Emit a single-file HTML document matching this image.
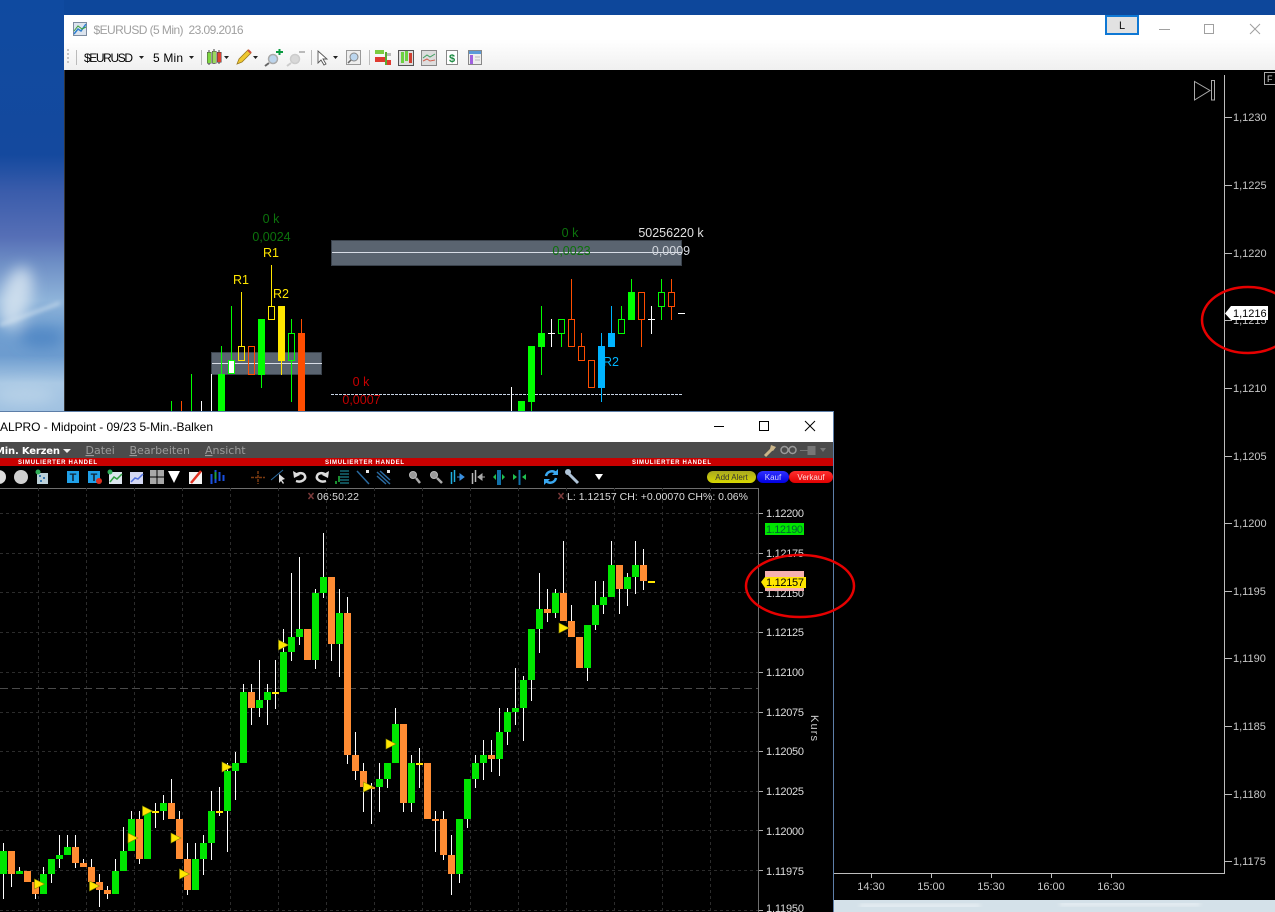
<!DOCTYPE html>
<html lang="de"><head><meta charset="utf-8"><title>EURUSD</title>
<style>html,body{margin:0;padding:0;background:#000;width:1275px;height:912px;overflow:hidden}svg{display:block}text{font-family:"Liberation Sans",Arial,sans-serif}</style></head>
<body>
<svg xmlns="http://www.w3.org/2000/svg" width="1275" height="912" viewBox="0 0 1275 912">
<defs>
<linearGradient id="sea" x1="0" y1="0" x2="0" y2="1"><stop offset="0" stop-color="#0f4aa0"/><stop offset=".17" stop-color="#14499e"/><stop offset=".21" stop-color="#3a5cab"/><stop offset=".26" stop-color="#566fb6"/><stop offset=".29" stop-color="#6f90c6"/><stop offset=".33" stop-color="#8fb4da"/><stop offset=".36" stop-color="#6f9ed0"/><stop offset=".39" stop-color="#6d9ccf"/><stop offset=".42" stop-color="#a9c8e4"/><stop offset=".46" stop-color="#9dbfe0"/><stop offset="1" stop-color="#9dbfe0"/></linearGradient>
<linearGradient id="tb" x1="0" y1="0" x2="0" y2="1"><stop offset="0" stop-color="#fff"/><stop offset=".45" stop-color="#fff"/><stop offset="1" stop-color="#f0f0f0"/></linearGradient>
<linearGradient id="pa" x1="0" y1="0" x2="0" y2="1"><stop offset="0" stop-color="#a8a820"/><stop offset="1" stop-color="#d8d800"/></linearGradient>
<linearGradient id="pb" x1="0" y1="0" x2="0" y2="1"><stop offset="0" stop-color="#3030ff"/><stop offset="1" stop-color="#0000e0"/></linearGradient>
<linearGradient id="pr" x1="0" y1="0" x2="0" y2="1"><stop offset="0" stop-color="#ff3030"/><stop offset="1" stop-color="#e00000"/></linearGradient>
<filter id="b8" x="-50%" y="-50%" width="200%" height="200%"><feGaussianBlur stdDeviation="7"/></filter>
<filter id="b3" x="-50%" y="-50%" width="200%" height="200%"><feGaussianBlur stdDeviation="2"/></filter>
<clipPath id="lw"><rect x="0" y="488" width="758" height="424"/></clipPath>
<path id="ar" d="M0-5 L10 0 L0 5Z"/>
</defs>

<!-- desktop background -->
<rect width="1275" height="912" fill="url(#sea)"/>
<rect x="64" y="0" width="1211" height="16" fill="#0d479b"/>
<g filter="url(#b8)"><ellipse cx="16" cy="298" rx="15" ry="32" fill="#d6e4f0" opacity=".85" transform="rotate(15 16 298)"/><ellipse cx="42" cy="338" rx="22" ry="9" fill="#4f86c4"/><ellipse cx="25" cy="395" rx="30" ry="8" fill="#b8d2e8"/></g>
<g filter="url(#b3)"><path d="M0 325L60 303" stroke="#d5e4f0" stroke-width="2"/></g>

<!-- upper window -->
<rect x="64" y="15" width="1211" height="897" fill="#000"/>
<rect x="64" y="15" width="1211" height="55" fill="url(#tb)"/>
<!-- bottom desktop strip -->
<rect x="834" y="900" width="441" height="12" fill="#d4e1e9"/>
<g filter="url(#b3)"><path d="M860 906H980M1060 904H1200" stroke="#eef3f6" stroke-width="3"/></g>
<rect x="64" y="70" width="1" height="342" fill="#333"/>
<!-- title icon -->
<rect x="73.500" y="22.500" width="13" height="13" fill="#dce4ee" stroke="#7d8ca0"/><path d="M74 34L78 29 81 31 86 24" fill="none" stroke="#2f7fd0" stroke-width="1.500"/><path d="M74 31L78 26 82 29 86 27" fill="none" stroke="#3aa040"/>
<text x="93.500" y="34" font-size="12" fill="#a0a0a0" textLength="150">$EURUSD (5 Min)&#160;&#160;23.09.2016</text>
<!-- L button + window controls -->
<rect x="1106" y="16" width="32" height="18" fill="#e2e2e2" stroke="#0f78d4" stroke-width="2"/>
<text x="1122" y="29" font-size="11" fill="#111" text-anchor="middle">L</text>
<path d="M1159 29.500H1170" stroke="#a0a0a0"/>
<rect x="1204.500" y="24.500" width="9" height="9" fill="none" stroke="#a0a0a0"/>
<path d="M1250 24L1260 34M1260 24L1250 34" stroke="#a0a0a0" fill="none"/>
<!-- toolbar -->
<path d="M68 49V51M68 53V55M68 57V59M68 61V63" stroke="#c4c4c4" stroke-width="2"/>
<path d="M76.500 50V65M201.500 50V65M311.500 50V65M369.500 50V65" stroke="#bbb"/>
<text x="84" y="62" font-size="12" fill="#000" textLength="49">$EURUSD</text>
<path d="M139 56h5l-2.500 3z" fill="#222"/>
<text x="153" y="62" font-size="12" fill="#000" textLength="30">5 Min</text>
<path d="M189 56h5l-2.500 3z" fill="#222"/>
<path d="M209 50v15M214 49v15M219 50v14" stroke="#444"/>
<g shape-rendering="crispEdges"><rect x="207" y="52" width="4" height="11" fill="#7ed840" stroke="#444" stroke-width=".5"/><rect x="212" y="51" width="4" height="12" fill="#9ad860" stroke="#444" stroke-width=".5"/><rect x="217" y="52" width="4" height="10" fill="#e04030" stroke="#444" stroke-width=".5"/></g>
<path d="M224 56h5l-2.500 3z" fill="#222"/>
<path d="M237 64l2-5 9-9 3 3-9 9z" fill="#f0c830" stroke="#9a7a20" stroke-width=".8"/><path d="M248 50l3 3" stroke="#d05040" stroke-width="2"/>
<path d="M253 56h5l-2.500 3z" fill="#222"/>
<circle cx="273" cy="59" r="4.500" fill="#bcd4ec" stroke="#aaa" stroke-width="1.500"/><path d="M269 63l-4 3" stroke="#666" stroke-width="2"/><path d="M276 52h7M279.500 49v6" stroke="#0a9a40" stroke-width="2"/>
<circle cx="295" cy="59" r="4.500" fill="#d8d8d8" stroke="#ccc" stroke-width="1.500"/><path d="M291 63l-4 3" stroke="#ccc" stroke-width="2"/><path d="M299 52h6" stroke="#bbb" stroke-width="2"/>
<path d="M318 51l9 8-4 0 3 5-2 1-3-5-3 3z" fill="#fff" stroke="#555" stroke-width=".9"/>
<path d="M333 56h5l-2.500 3z" fill="#222"/>
<rect x="346.500" y="50.500" width="14" height="14" fill="#eee" stroke="#999"/><circle cx="354" cy="57" r="4" fill="#bcd6ee" stroke="#888"/><path d="M351 60l-3 3" stroke="#666" stroke-width="1.500"/>
<g shape-rendering="crispEdges"><rect x="375" y="50" width="9" height="4" fill="#7ccc40"/><rect x="375" y="57" width="10" height="5" fill="#e03a30"/><rect x="387" y="53" width="4" height="3" fill="#bbb"/><rect x="387" y="60" width="4" height="5" fill="#e03a30"/><rect x="385" y="52" width="2" height="13" fill="#5aaa30"/></g>
<rect x="398.500" y="50.500" width="15" height="15" fill="#ddd" stroke="#555"/><g shape-rendering="crispEdges"><rect x="401" y="52" width="3" height="11" fill="#6bd040"/><rect x="405" y="51" width="3" height="10" fill="#6bd040"/><rect x="409" y="53" width="3" height="10" fill="#d04030"/></g>
<rect x="421.500" y="50.500" width="15" height="15" fill="#ddd" stroke="#888"/><path d="M423 58l4-3 3 2 5-3" fill="none" stroke="#40a060"/><path d="M423 61l4-2 3 2 5-1" fill="none" stroke="#d06050"/>
<rect x="446.500" y="50.500" width="11" height="14" fill="#fff" stroke="#888"/><text x="452" y="62" font-size="11" font-weight="bold" fill="#1a8a40" text-anchor="middle">$</text>
<rect x="468.500" y="50.500" width="13" height="14" fill="#eee" stroke="#888"/><rect x="469" y="51" width="12" height="3" fill="#5a9ad8"/><rect x="470" y="55" width="3" height="9" fill="#a060e0"/><path d="M475 57h5M475 60h5" stroke="#bbb"/>

<!-- right axis of upper chart -->
<path d="M1224.500 75V873.500H833" fill="none" stroke="#bdbdbd"/>
<rect x="1264.500" y="72.500" width="12" height="12" fill="none" stroke="#aaa"/><text x="1267" y="82" font-size="9" fill="#ccc">F</text>
<path d="M1194.500 81.500V100L1210 90.500Z" fill="none" stroke="#aaa"/><rect x="1211.500" y="80.500" width="3" height="19.500" fill="none" stroke="#aaa"/>
<path d="M1225 117.500h7M1225 185.500h7M1225 253.500h7M1225 320.500h7M1225 388.500h7M1225 456.500h7M1225 523.500h7M1225 591.500h7M1225 658.500h7M1225 726.500h7M1225 794.500h7M1225 861.500h7M871.500 874v4M931.500 874v4M991.500 874v4M1051.500 874v4M1111.500 874v4" stroke="#bdbdbd"/>
<g font-size="11" fill="#c6c6c6">
<text x="1233" y="121">1,1230</text><text x="1233" y="189">1,1225</text><text x="1233" y="257">1,1220</text><text x="1233" y="324">1,1215</text><text x="1233" y="392">1,1210</text><text x="1233" y="460">1,1205</text><text x="1233" y="527">1,1200</text><text x="1233" y="595">1,1195</text><text x="1233" y="662">1,1190</text><text x="1233" y="730">1,1185</text><text x="1233" y="798">1,1180</text><text x="1233" y="865">1,1175</text>
<text x="871" y="890" text-anchor="middle">14:30</text><text x="931" y="890" text-anchor="middle">15:00</text><text x="991" y="890" text-anchor="middle">15:30</text><text x="1051" y="890" text-anchor="middle">16:00</text><text x="1111" y="890" text-anchor="middle">16:30</text>
</g>
<path d="M1225 313.500L1231 306H1268V320H1231Z" fill="#fff"/>
<text x="1233" y="317" font-size="11" fill="#000">1,1216</text>

<!-- upper gray boxes -->
<rect x="211.500" y="352.500" width="110" height="22" fill="#5a6470" stroke="#3a424c"/><path d="M212 363.500H322" stroke="#d8dde6"/>
<rect x="331.500" y="240.500" width="350" height="25" fill="#5a6470" stroke="#3a424c"/><path d="M332 252.500H682" stroke="#d8dde6"/>
<path d="M331 394.500H682" stroke="#c8d4e6" stroke-dasharray="3 1"/>

<!-- upper candles -->
<g shape-rendering="crispEdges" fill="none">
<path stroke="#00ff00" d="M171.500 401V411M191.500 374V411M221.500 346V374M231.500 306V360M261.500 375V388M291.500 319V333M291.500 361V402M531.500 402V411M521.500 405V411M541.500 306V333M541.500 347V375M561.500 334V347M621.500 306V319M631.500 279V292M661.500 279V292M661.500 307V320"/>
<path stroke="#ff4d00" d="M181.500 401V411M301.500 319V333M571.500 279V319M581.500 333V346M641.500 320V347M671.500 279V292M671.500 307V320"/>
<path stroke="#ffe600" d="M241.500 292V346M271.500 265V306M281.500 361V375"/>
<path stroke="#fff" d="M201.500 401V411M211.500 374V411M511.500 387V411M551.500 319V347M651.500 306V334M548 333.500H555M648 319.500H655M678 313.500H685"/>
<path stroke="#00b4ff" d="M601.500 333V346M601.500 388V402M611.500 306V333"/>
<path fill="#00ff00" d="M218 374h7v37h-7zM258 319h7v56h-7zM518 401h7v10h-7zM528 346h7v56h-7zM538 333h7v14h-7zM628 292h7v28h-7z"/>
<path fill="#ff4d00" d="M298 333h7v78h-7z"/>
<path fill="#ffe600" d="M278 306h7v55h-7z"/>
<path fill="#00b4ff" d="M598 346h7v42h-7zM608 333h7v14h-7z"/>
<rect x="228.500" y="360.500" width="6" height="13" fill="#fff" stroke="#00ff00"/>
<path stroke="#ffe600" d="M238.500 346.500h6v14h-6zM268.500 306.500h6v13h-6z"/>
<path stroke="#00ff00" d="M288.500 333.500h6v27h-6zM558.500 319.500h6v14h-6zM618.500 319.500h6v14h-6zM658.500 292.500h6v14h-6z"/>
<path stroke="#ff4d00" d="M248.500 346.500h6v28h-6zM568.500 319.500h6v27h-6zM578.500 346.500h6v14h-6zM588.500 360.500h6v27h-6zM638.500 292.500h6v27h-6zM668.500 292.500h6v14h-6z"/>
</g>
<g font-size="12.500" text-anchor="middle">
<text x="271" y="223" fill="#0c720c">0 k</text><text x="271.500" y="241" fill="#0c720c">0,0024</text><text x="271" y="257" fill="#ffe600">R1</text><text x="241" y="284" fill="#ffe600">R1</text><text x="281" y="298" fill="#ffe600">R2</text>
<text x="361" y="386" fill="#c80000">0 k</text><text x="361.500" y="404" fill="#c00000">0,0007</text>
<text x="570" y="237" fill="#0c720c">0 k</text><text x="571.500" y="255" fill="#0c720c">0,0023</text><text x="671" y="237" fill="#e0e0e0">50256220 k</text><text x="671" y="255" fill="#d4d8de">0,0009</text>
<text x="611" y="366" fill="#00b4ff">R2</text>
</g>

<!-- lower window -->
<rect x="0" y="411" width="834" height="501" fill="#000"/>
<path d="M0 411.500H833.500V912" fill="none" stroke="#5d7ea8"/>
<rect x="0" y="412" width="833" height="30" fill="#fff"/>
<text x="0" y="431" font-size="12" fill="#000" textLength="213">ALPRO - Midpoint - 09/23 5-Min.-Balken</text>
<path d="M714 426.500H724" stroke="#000"/><rect x="759.500" y="421.500" width="9" height="9" fill="none" stroke="#000"/><path d="M805 421L815 431M815 421L805 431" stroke="#000" fill="none"/>
<rect x="0" y="442" width="833" height="16" fill="#4b4b4b"/>
<g font-size="11" fill="#9c9c9c">
<text x="-5" y="454" fill="#fff" font-weight="bold" font-size="10" textLength="65" style="font-family:'DejaVu Sans',sans-serif">Min. Kerzen</text>
<text x="85.500" y="454" style="font-family:'DejaVu Sans',sans-serif"><tspan text-decoration="underline">D</tspan>atei</text>
<text x="129.500" y="454" style="font-family:'DejaVu Sans',sans-serif"><tspan text-decoration="underline">B</tspan>earbeiten</text>
<text x="205" y="454" style="font-family:'DejaVu Sans',sans-serif"><tspan text-decoration="underline">A</tspan>nsicht</text>
</g>
<path d="M63 449h8l-4 4z" fill="#eee"/>
<!-- menu right icons -->
<path d="M765 456l7-7" stroke="#cbb68a" stroke-width="3"/><path d="M771 445l5 2-3 4-3-2z" fill="#cbb68a"/>
<g fill="none" stroke="#9a9a9a" stroke-width="1.500"><circle cx="784.500" cy="450" r="3.500"/><circle cx="792.500" cy="450" r="3.500"/></g>
<path d="M800 450.500H808M808 446.500h7v8h-7z" fill="#777" stroke="#777"/><path d="M820 448h6l-3 4z" fill="#777"/>
<rect x="0" y="458" width="833" height="8" fill="#c80000"/>
<g font-size="6" font-weight="bold" fill="#fff">
<text x="18" y="464" textLength="79" lengthAdjust="spacing">SIMULIERTER HANDEL</text>
<text x="325" y="464" textLength="79" lengthAdjust="spacing">SIMULIERTER HANDEL</text>
<text x="632" y="464" textLength="79" lengthAdjust="spacing">SIMULIERTER HANDEL</text>
</g>

<!-- lower toolbar icons -->
<circle cx="-1" cy="477" r="7" fill="#ddd"/><circle cx="21" cy="477" r="7" fill="#d0d0d0"/>
<rect x="37" y="473" width="11" height="11" fill="#bcd0d8"/><circle cx="38" cy="472" r="2.500" fill="#2fae58"/><path d="M39 476h2M43 478h2M40 481h2" stroke="#3a7ab0" stroke-width="2"/>
<rect x="67" y="471" width="12" height="12" fill="#20a0e8"/><text x="73" y="481" font-size="11" font-weight="bold" fill="#123" text-anchor="middle">T</text>
<rect x="88" y="471" width="12" height="12" fill="#20a0e8"/><text x="94" y="481" font-size="11" font-weight="bold" fill="#123" text-anchor="middle">T</text><circle cx="99" cy="481" r="3" fill="#e03020"/>
<rect x="109" y="472" width="13" height="12" fill="#dde6ee"/><path d="M110 482l4-5 3 2 5-5" fill="none" stroke="#30a040" stroke-width="1.500"/><circle cx="110" cy="472" r="2.500" fill="#2fae58"/>
<rect x="130" y="472" width="13" height="12" fill="#d4d8f2"/><path d="M131 482l4-4 3 1 5-5" fill="none" stroke="#5070e0" stroke-width="1.500"/>
<g shape-rendering="crispEdges" fill="#a8a8a8"><rect x="150" y="470" width="6.500" height="6.500"/><rect x="157.500" y="470" width="6.500" height="6.500"/><rect x="150" y="477.500" width="6.500" height="6.500"/><rect x="157.500" y="477.500" width="6.500" height="6.500"/></g>
<path d="M168 471h12l-6 12z" fill="#fff"/>
<rect x="189" y="472" width="13" height="12" fill="#f4f4f4"/><path d="M191 483l10-12" stroke="#e03020" stroke-width="2.500"/>
<path d="M211.500 474V484M215.500 470V483M219.500 472V481M223.500 475V481" stroke="#1a50e0" stroke-width="2"/><path d="M215.500 472V479" stroke="#20a040" stroke-width="2"/>
<path d="M251 477.500H265M258 471V484" stroke="#7a3a10" stroke-width="1.500" stroke-dasharray="3 1"/>
<path d="M271 480L283 470" stroke="#2a6aa0"/><path d="M279 474l0 9 2-2 2 3 1-1-2-3 3-1z" fill="#ddd"/>
<path d="M296 481c6 2 10-2 9-5s-5-4-9-1" fill="none" stroke="#ddd" stroke-width="2.500"/><path d="M293 471l1 7 6-3z" fill="#ddd"/>
<path d="M326 481c-6 2-10-2-9-5s5-4 9-1" fill="none" stroke="#ddd" stroke-width="2.500"/><path d="M329 471l-1 7-6-3z" fill="#ddd"/>
<path d="M340 471h9M340 474h9M340 477h9M340 480h9M340 483h9" stroke="#20a0b0"/><path d="M336 484v-3M339 482v-6" stroke="#20c040" stroke-width="1.500"/>
<path d="M357 471L369 484" stroke="#2a6aa0" stroke-width="1.500"/><rect x="366" y="470" width="3" height="3" fill="#e8e8e8"/>
<path d="M377 472L390 484M380 471L390 480M377 476L386 484" stroke="#2a6aa0" stroke-width="1.500"/><rect x="387" y="470" width="3" height="3" fill="#e8e8e8"/>
<g fill="#999" stroke="#bbb"><circle cx="413" cy="475" r="3.500"/><circle cx="434" cy="475" r="3.500"/></g><path d="M416 478l4 5M437 478l5 5" stroke="#aaa" stroke-width="2.500"/>
<path d="M451.500 472V484M454.500 470V482" stroke="#20b0e0" stroke-width="1.500"/><path d="M457 477h4M464 477l-4-3v6z" fill="#3a90e0" stroke="#3a90e0"/>
<path d="M472.500 473V484M475.500 470V482" stroke="#bbb" stroke-width="1.500"/><path d="M481 477h4M478 477l4-3v6z" fill="#aaa" stroke="#aaa"/>
<rect x="497" y="470" width="4" height="15" fill="#1070a8"/><path d="M493 477l3-3v6zM505 477l-3-3v6z" fill="#20c050"/>
<path d="M519.500 470V485" stroke="#1070a8" stroke-width="2"/><path d="M513 474l4 3-4 3zM526 474l-4 3 4 3z" fill="#20c050"/>
<path d="M546 476a6 6 0 0 1 10-3M556 478a6 6 0 0 1-10 3" fill="none" stroke="#3aa8f0" stroke-width="2.500"/><path d="M558 469v6h-6zM544 485v-6h6z" fill="#3aa8f0"/>
<path d="M567 472l11 11" stroke="#b0c4d8" stroke-width="3"/><circle cx="568" cy="472" r="3" fill="#b0c4d8"/>
<path d="M595 474h8l-4 6z" fill="#fff"/>
<rect x="707" y="471" width="49" height="12" rx="6" fill="url(#pa)"/><text x="731.500" y="480" font-size="8" fill="#333" text-anchor="middle">Add Alert</text>
<rect x="757" y="471" width="32" height="12" rx="6" fill="url(#pb)"/><text x="773" y="480" font-size="8" fill="#d8d8ff" text-anchor="middle">Kauf</text>
<rect x="789" y="471" width="44" height="12" rx="6" fill="url(#pr)"/><text x="811" y="480" font-size="8" fill="#ffe0e0" text-anchor="middle">Verkauf</text>

<!-- lower chart frame and grid -->
<path d="M0 488.500H758.500V912" fill="none" stroke="#6e6e6e"/>
<g stroke="#2c2c2c" stroke-dasharray="3 3" shape-rendering="crispEdges" clip-path="url(#lw)">
<path d="M38.500 488V912M86.500 488V912M134.500 488V912M182.500 488V912M230.500 488V912M278.500 488V912M326.500 488V912M374.500 488V912M422.500 488V912M470.500 488V912M518.500 488V912M566.500 488V912M614.500 488V912M662.500 488V912M710.500 488V912"/>
<path d="M0 513.500H758M0 553.500H758M0 592.500H758M0 632.500H758M0 672.500H758M0 712.500H758M0 751.500H758M0 791.500H758M0 830.500H758M0 870.500H758M0 910.500H758"/>
</g>
<path d="M0 688.500H758" stroke="#4a4a4a" stroke-dasharray="8 4" shape-rendering="crispEdges"/>
<path d="M308.500 493l5 6M313.500 493l-5 6M558.500 493l5 6M563.500 493l-5 6" stroke="#7a3a3a" stroke-width="1.500"/>
<text x="317" y="500" font-size="10.500" fill="#ddd" textLength="42">06:50:22</text>
<text x="567" y="500" font-size="10.500" fill="#ddd" textLength="181">L: 1.12157 CH: +0.00070 CH%: 0.06%</text>

<!-- lower candles -->
<g shape-rendering="crispEdges" clip-path="url(#lw)">
<path fill="none" stroke="#fff" d="M3.500 843V899M11.500 851V887M19.500 867V874M35.500 882V899M43.500 867V894M51.500 859V883M59.500 835V868M67.500 835V847M75.500 835V868M83.500 859V867M91.500 859V882M99.500 874V907M107.500 886V899M115.500 859V871M123.500 827V851M131.500 811V819M139.500 811V864M155.500 803V828M163.500 795V820M171.500 779V803M179.500 811V819M187.500 843V895M195.500 843V875M203.500 835V875M211.500 791V860M219.500 787V816M227.500 763V852M235.500 752V800M243.500 684V692M251.500 684V725M259.500 660V717M267.500 684V725M275.500 660V709M283.500 629V652M291.500 573V661M299.500 557V645M315.500 589V669M323.500 533V598M331.500 577V661M339.500 589V677M347.500 597V764M355.500 732V780M363.500 763V812M371.500 783V824M379.500 763V812M387.500 763V788M395.500 708V724M403.500 803V812M411.500 755V812M419.500 748V788M435.500 811V852M443.500 811V860M451.500 835V895M459.500 874V883M467.500 819V828M475.500 755V788M483.500 740V780M491.500 740V772M499.500 708V776M507.500 708V745M515.500 668V725M523.500 676V741M531.500 680V701M539.500 573V653M547.500 589V622M555.500 589V618M563.500 541V621M571.500 605V637M587.500 668V681M595.500 581V630M603.500 581V614M611.500 541V565M619.500 589V614M627.500 573V606M635.500 541V594M643.500 549V590"/>
<path fill="#00e600" d="M0 851h7V874h-7zM16 871h7V874h-7zM40 874h7V894h-7zM48 859h7V874h-7zM56 855h7V859h-7zM64 847h7V855h-7zM112 871h7V894h-7zM120 851h7V871h-7zM128 819h7V851h-7zM144 811h7V859h-7zM160 803h7V811h-7zM192 859h7V890h-7zM200 843h7V859h-7zM208 811h7V843h-7zM224 771h7V811h-7zM232 763h7V771h-7zM240 692h7V763h-7zM256 700h7V708h-7zM264 692h7V700h-7zM280 652h7V692h-7zM288 637h7V652h-7zM296 629h7V637h-7zM312 593h7V660h-7zM320 577h7V593h-7zM336 613h7V644h-7zM376 779h7V787h-7zM384 763h7V779h-7zM392 724h7V763h-7zM408 763h7V803h-7zM456 819h7V874h-7zM464 779h7V819h-7zM472 763h7V779h-7zM480 755h7V763h-7zM496 732h7V759h-7zM504 712h7V732h-7zM512 708h7V712h-7zM520 680h7V708h-7zM528 629h7V680h-7zM536 609h7V629h-7zM552 593h7V613h-7zM584 625h7V668h-7zM592 605h7V625h-7zM600 597h7V605h-7zM608 565h7V597h-7zM624 577h7V589h-7zM632 565h7V577h-7z"/>
<path fill="#ff8c33" d="M8 851h7V874h-7zM24 871h7V882h-7zM32 882h7V894h-7zM72 847h7V863h-7zM80 863h7V867h-7zM88 867h7V882h-7zM96 882h7V890h-7zM104 890h7V894h-7zM136 819h7V859h-7zM168 803h7V819h-7zM176 819h7V859h-7zM184 859h7V890h-7zM248 692h7V708h-7zM304 629h7V660h-7zM328 577h7V644h-7zM344 613h7V755h-7zM352 755h7V771h-7zM360 771h7V787h-7zM368 787h7V789h-7zM400 724h7V803h-7zM424 763h7V819h-7zM432 819h7V821h-7zM440 819h7V855h-7zM448 855h7V874h-7zM488 755h7V759h-7zM544 609h7V613h-7zM560 593h7V621h-7zM568 621h7V637h-7zM576 637h7V668h-7zM616 565h7V589h-7zM640 565h7V581h-7z"/>
<path fill="#ffe600" d="M152 811h7v2h-7zM216 811h7v2h-7zM272 692h7v2h-7zM416 763h7v2h-7zM648 581h7v2h-7z"/>
</g>
<!-- arrows -->
<g fill="#ffe600" stroke="#8a8a00" stroke-width=".6">
<use href="#ar" x="34.500" y="884"/><use href="#ar" x="89.500" y="886"/><use href="#ar" x="128" y="838"/><use href="#ar" x="142.500" y="811"/><use href="#ar" x="171" y="838"/><use href="#ar" x="179.500" y="874"/><use href="#ar" x="222" y="767"/><use href="#ar" x="278.500" y="645"/><use href="#ar" x="386" y="744"/><use href="#ar" x="363.500" y="787"/><use href="#ar" x="559" y="628"/>
</g>

<!-- lower axis labels -->
<path d="M759 513.500h4M759 553.500h4M759 592.500h4M759 632.500h4M759 672.500h4M759 712.500h4M759 751.500h4M759 791.500h4M759 830.500h4M759 870.500h4M759 910.500h4" stroke="#aaa"/>
<g font-size="11" fill="#ddd">
<text x="766" y="517" textLength="38">1.12200</text><text x="766" y="557" textLength="38">1.12175</text><text x="766" y="597" textLength="38">1.12150</text><text x="766" y="636" textLength="38">1.12125</text><text x="766" y="676" textLength="38">1.12100</text><text x="766" y="716" textLength="38">1.12075</text><text x="766" y="755" textLength="38">1.12050</text><text x="766" y="795" textLength="38">1.12025</text><text x="766" y="835" textLength="38">1.12000</text><text x="766" y="875" textLength="38">1.11975</text><text x="766" y="912" textLength="38">1.11950</text>
</g>
<rect x="765" y="523" width="39" height="12" fill="#00e600"/>
<text x="766" y="533" font-size="11" fill="#063" textLength="37">1.12190</text>
<rect x="765" y="571" width="39" height="20" fill="#f5b0b0"/>
<path d="M761 582L765 577H806V588H765Z" fill="#ffe600"/>
<text x="766" y="586" font-size="11" fill="#000" textLength="38">1.12157</text>
<text transform="translate(811 715) rotate(90)" font-size="11" fill="#ccc" textLength="26">Kurs</text>

<!-- red ellipses -->
<ellipse cx="1248" cy="320" rx="46" ry="33" fill="none" stroke="#e60000" stroke-width="2.500"/>
<ellipse cx="800" cy="586" rx="54" ry="31" fill="none" stroke="#e60000" stroke-width="2.500"/>
</svg>
</body></html>
